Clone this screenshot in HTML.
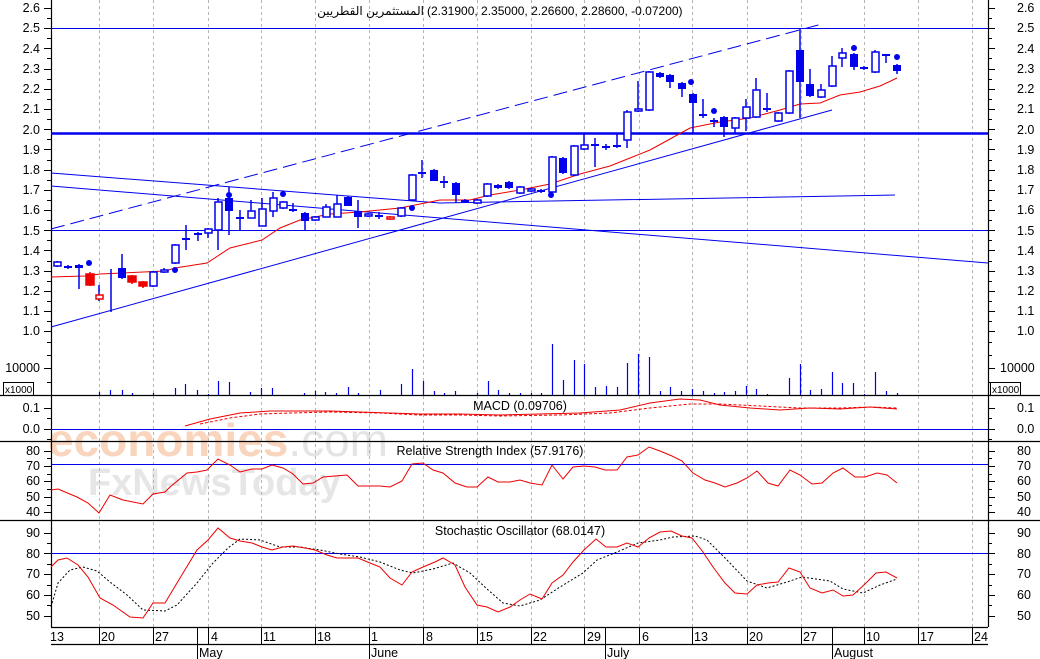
<!DOCTYPE html>
<html><head><meta charset="utf-8"><style>
html,body{margin:0;padding:0;background:#fff;}
svg{display:block;font-family:"Liberation Sans","Noto Sans CJK SC","DejaVu Sans",sans-serif;}
</style></head><body>
<svg width="1040" height="659" viewBox="0 0 1040 659" xmlns="http://www.w3.org/2000/svg">
<rect width="1040" height="659" fill="#fff"/>
<!-- watermark -->
<text x="48" y="456" font-size="46" fill="#f8c8a8" opacity="0.75" font-weight="bold">economies<tspan fill="#dcdcdc" font-weight="normal">.com</tspan></text>
<text x="88" y="495" font-size="38" fill="#e6e6e6" font-weight="bold">FxNewsToday</text>
<!-- grid -->
<g stroke="#b5b5b5" stroke-dasharray="3,3" stroke-width="1">
<path d="M99.5 0V627M153.5 0V627M208.5 0V627M261.5 0V627M315.5 0V627M369.5 0V627M423.5 0V627M477.5 0V627M531.5 0V627M584.5 0V627M639.5 0V627M692.5 0V627M747.5 0V627M801.5 0V627M864.5 0V627M918.5 0V627M972.5 0V627"/>
</g>
<!-- panel separators -->
<g stroke="#000" stroke-width="1.2">
<path d="M0 395.5H1040M0 441.5H1040M0 520.5H1040M51 627.5H988M51 644.5H988"/>
<path d="M51.5 0V627M988.5 0V627"/>
</g>
<!-- date ticks -->
<g stroke="#000"><path d="M99.5 627V644M153.5 627V644M208.5 627V644M261.5 627V644M315.5 627V644M369.5 627V644M423.5 627V644M477.5 627V644M531.5 627V644M584.5 627V644M639.5 627V644M692.5 627V644M747.5 627V644M801.5 627V644M864.5 627V644M918.5 627V644M972.5 627V644M197.5 627V659M369.5 644V659M605.5 627V659M832.5 627V659"/></g>
<g font-size="12.5" fill="#000">
<text x="50" y="641">13</text><text x="101" y="641">20</text><text x="155" y="641">27</text><text x="211" y="641">4</text><text x="263" y="641">11</text><text x="317" y="641">18</text><text x="371" y="641">1</text><text x="426" y="641">8</text><text x="479" y="641">15</text><text x="533" y="641">22</text><text x="587" y="641">29</text><text x="642" y="641">6</text><text x="694" y="641">13</text><text x="749" y="641">20</text><text x="803" y="641">27</text><text x="866" y="641">10</text><text x="920" y="641">17</text><text x="974" y="641">24</text>
<text x="199" y="657">May</text><text x="371" y="657">June</text><text x="607" y="657">July</text><text x="834" y="657">August</text>
</g>
<!-- axis labels -->
<g font-size="12.5" fill="#000" text-anchor="end">
<text x="40" y="12">2.6</text><text x="40" y="32">2.5</text><text x="40" y="53">2.4</text><text x="40" y="73">2.3</text><text x="40" y="93">2.2</text><text x="40" y="113">2.1</text><text x="40" y="134">2.0</text><text x="40" y="154">1.9</text><text x="40" y="174">1.8</text><text x="40" y="194">1.7</text><text x="40" y="214">1.6</text><text x="40" y="235">1.5</text><text x="40" y="255">1.4</text><text x="40" y="275">1.3</text><text x="40" y="295">1.2</text><text x="40" y="315">1.1</text><text x="40" y="335">1.0</text>
<text x="40" y="372">10000</text>
<text x="40" y="412">0.1</text><text x="40" y="433">0.0</text>
<text x="40" y="455">80</text><text x="40" y="470">70</text><text x="40" y="485">60</text><text x="40" y="501">50</text><text x="40" y="516">40</text>
<text x="40" y="537">90</text><text x="40" y="558">80</text><text x="40" y="578">70</text><text x="40" y="599">60</text><text x="40" y="620">50</text>
</g>
<g font-size="12.5" fill="#000" text-anchor="start">
<text x="1017" y="12">2.6</text><text x="1017" y="32">2.5</text><text x="1017" y="53">2.4</text><text x="1017" y="73">2.3</text><text x="1017" y="93">2.2</text><text x="1017" y="113">2.1</text><text x="1017" y="134">2.0</text><text x="1017" y="154">1.9</text><text x="1017" y="174">1.8</text><text x="1017" y="194">1.7</text><text x="1017" y="214">1.6</text><text x="1017" y="235">1.5</text><text x="1017" y="255">1.4</text><text x="1017" y="275">1.3</text><text x="1017" y="295">1.2</text><text x="1017" y="315">1.1</text><text x="1017" y="335">1.0</text>
<text x="1000" y="372">10000</text>
<text x="1017" y="412">0.1</text><text x="1017" y="433">0.0</text>
<text x="1017" y="455">80</text><text x="1017" y="470">70</text><text x="1017" y="485">60</text><text x="1017" y="501">50</text><text x="1017" y="516">40</text>
<text x="1017" y="537">90</text><text x="1017" y="558">80</text><text x="1017" y="578">70</text><text x="1017" y="599">60</text><text x="1017" y="620">50</text>
</g>
<g stroke="#000" fill="none"><rect x="3.5" y="382.5" width="30" height="13"/><rect x="990.5" y="382.5" width="30" height="13"/></g>
<text x="5" y="393" font-size="10">x1000</text><text x="992" y="393" font-size="10">x1000</text>
<!-- axis ticks -->
<g stroke="#000">
<path d="M44 8.5H51M44 28.5H51M44 48.5H51M44 69.5H51M44 89.5H51M44 109.5H51M44 129.5H51M44 149.5H51M44 170.5H51M44 190.5H51M44 210.5H51M44 230.5H51M44 250.5H51M44 271.5H51M44 291.5H51M44 311.5H51M44 331.5H51M44 368.5H51M44 408.5H51M44 429.5H51M44 451.5H51M44 466.5H51M44 481.5H51M44 497.5H51M44 512.5H51M44 533.5H51M44 553.5H51M44 574.5H51M44 595.5H51M44 616.5H51"/>
<path d="M47 18.5H51M47 38.5H51M47 58.5H51M47 79.5H51M47 99.5H51M47 119.5H51M47 139.5H51M47 160.5H51M47 180.5H51M47 200.5H51M47 220.5H51M47 240.5H51M47 261.5H51M47 281.5H51M47 301.5H51M47 321.5H51M47 342.5H51M47 355.5H51M47 382.5H51M47 418.5H51M47 439.5H51M47 458.5H51M47 474.5H51M47 489.5H51M47 505.5H51M47 543.5H51M47 564.5H51M47 585.5H51M47 605.5H51"/>
<path d="M988 8.5H995M988 28.5H995M988 48.5H995M988 69.5H995M988 89.5H995M988 109.5H995M988 129.5H995M988 149.5H995M988 170.5H995M988 190.5H995M988 210.5H995M988 230.5H995M988 250.5H995M988 271.5H995M988 291.5H995M988 311.5H995M988 331.5H995M988 368.5H995M988 408.5H995M988 429.5H995M988 451.5H995M988 466.5H995M988 481.5H995M988 497.5H995M988 512.5H995M988 533.5H995M988 553.5H995M988 574.5H995M988 595.5H995M988 616.5H995"/>
<path d="M988 18.5H992M988 38.5H992M988 58.5H992M988 79.5H992M988 99.5H992M988 119.5H992M988 139.5H992M988 160.5H992M988 180.5H992M988 200.5H992M988 220.5H992M988 240.5H992M988 261.5H992M988 281.5H992M988 301.5H992M988 321.5H992M988 342.5H992M988 355.5H992M988 382.5H992M988 418.5H992M988 439.5H992M988 458.5H992M988 474.5H992M988 489.5H992M988 505.5H992M988 543.5H992M988 564.5H992M988 585.5H992M988 605.5H992"/>
</g>
<!-- title -->
<text x="424" y="15" font-size="12" text-anchor="end" fill="#000">المستثمرين القطريين</text>
<text x="427" y="15" font-size="12" text-anchor="start" fill="#000">(2.31900, 2.35000, 2.26600, 2.28600, -0.07200)</text>
<!-- horizontal & trend lines -->
<g stroke="#0000ee" fill="none" stroke-width="1">
<path d="M51 28.5H988M51 230.5H988"/>
<path d="M51 133.5H988" stroke-width="2.5"/>
<path d="M51 327L832 110"/>
<path d="M51 229L822 24" stroke-dasharray="14,6"/>
<path d="M51 173L400 200L440 203L895 195"/>
<path d="M51 186L988 263"/>
</g>
<!-- MA -->
<polyline fill="none" stroke="#ee0000" stroke-width="1" points="51,277 85,276 100,274 165,271 175,268 207,263 230,248 262,240 280,228 300,220 330,214 360,212 400,208 440,200 470,200 490,195 520,190 550,184 580,174 610,166 630,158 650,150 670,139 690,128 720,122 750,118 780,110 800,104 820,103 840,95 860,92 880,86 897,78"/>
<!-- candles -->
<g stroke="#0000ee" stroke-width="1.5" fill="#fff">
<path d="M57 261V267M68 265V269M79 264V289M99 285V301M111 269V312M122 254V279M153 271V287M164 268V273M175 244V264M186 225V250M198 232V241M208 228V238M218 198V250M229 187V235M240 210V230M251 200V218M262 198V226M273 192V217M283 201V209M293 203V212M305 212V230M315 216V221M326 204V217M337 195V217M348 196V206M358 200V228M368 213V217M379 212V219M401 207V217M412 174V201M422 160V178M434 169V181M444 176V188M456 182V203M465 199V203M477 199V204M487 183V197M498 184V189M509 181V189M520 186V194M531 188V192M541 189V193M552 156V193M563 157V174M574 145V176M584 133V150M595 138V167M606 144V150M617 134V148M627 110V148M638 81V112M649 71V111M660 72V78M670 74V88M682 82V97M693 93V133M703 99V118M714 118V127M724 116V137M735 117V133M746 99V131M756 78V118M767 93V112M778 112V122M789 70V114M800 29V118M810 69V97M821 84V98M832 56V87M842 48V67M854 53V70M864 66V70M875 50V73M886 54V63M897 64V74"/>
<rect x="54" y="262" width="7" height="4"/>
<rect x="150" y="272" width="7" height="14"/>
<rect x="161" y="270" width="7" height="2"/>
<rect x="172" y="245" width="7" height="18"/>
<rect x="205" y="229" width="7" height="4"/>
<rect x="215" y="202" width="7" height="28"/>
<rect x="248" y="211" width="7" height="7"/>
<rect x="259" y="209" width="7" height="17"/>
<rect x="270" y="198" width="7" height="13"/>
<rect x="280" y="202" width="7" height="6"/>
<rect x="312" y="217" width="7" height="3"/>
<rect x="323" y="207" width="7" height="10"/>
<rect x="334" y="204" width="7" height="13"/>
<rect x="365" y="214" width="7" height="2"/>
<rect x="398" y="208" width="7" height="8"/>
<rect x="409" y="175" width="7" height="25"/>
<rect x="474" y="200" width="7" height="3"/>
<rect x="484" y="184" width="7" height="12"/>
<rect x="517" y="187" width="7" height="6"/>
<rect x="528" y="189" width="7" height="2"/>
<rect x="549" y="157" width="7" height="35"/>
<rect x="571" y="146" width="7" height="29"/>
<rect x="581" y="145" width="7" height="4"/>
<rect x="624" y="112" width="7" height="28"/>
<rect x="635" y="109" width="7" height="2"/>
<rect x="646" y="72" width="7" height="38"/>
<rect x="732" y="118" width="7" height="10"/>
<rect x="743" y="107" width="7" height="11"/>
<rect x="753" y="90" width="7" height="27"/>
<rect x="775" y="113" width="7" height="8"/>
<rect x="786" y="71" width="7" height="42"/>
<rect x="818" y="90" width="7" height="7"/>
<rect x="829" y="66" width="7" height="20"/>
<rect x="839" y="53" width="7" height="5"/>
<rect x="872" y="52" width="7" height="20"/>
</g>
<g fill="#0000ee">
<rect x="64" y="266" width="8" height="2"/>
<rect x="75" y="265" width="8" height="3"/>
<rect x="118" y="268" width="8" height="10"/>
<rect x="182" y="238" width="8" height="2"/>
<rect x="194" y="233" width="8" height="2"/>
<rect x="225" y="198" width="8" height="13"/>
<rect x="236" y="217" width="8" height="2"/>
<rect x="289" y="209" width="8" height="2"/>
<rect x="301" y="213" width="8" height="8"/>
<rect x="344" y="197" width="8" height="9"/>
<rect x="354" y="211" width="8" height="6"/>
<rect x="375" y="215" width="8" height="2"/>
<rect x="418" y="172" width="8" height="2"/>
<rect x="430" y="170" width="8" height="11"/>
<rect x="440" y="181" width="8" height="2"/>
<rect x="452" y="183" width="8" height="12"/>
<rect x="461" y="200" width="8" height="2"/>
<rect x="494" y="185" width="8" height="3"/>
<rect x="505" y="182" width="8" height="6"/>
<rect x="537" y="190" width="8" height="2"/>
<rect x="559" y="158" width="8" height="15"/>
<rect x="591" y="144" width="8" height="2"/>
<rect x="602" y="146" width="8" height="2"/>
<rect x="613" y="145" width="8" height="2"/>
<rect x="656" y="73" width="8" height="4"/>
<rect x="666" y="75" width="8" height="7"/>
<rect x="678" y="83" width="8" height="6"/>
<rect x="689" y="94" width="8" height="9"/>
<rect x="699" y="114" width="8" height="2"/>
<rect x="710" y="120" width="8" height="2"/>
<rect x="720" y="117" width="8" height="10"/>
<rect x="763" y="108" width="8" height="2"/>
<rect x="796" y="50" width="8" height="32"/>
<rect x="806" y="84" width="8" height="12"/>
<rect x="850" y="54" width="8" height="13"/>
<rect x="860" y="67" width="8" height="2"/>
<rect x="882" y="54" width="8" height="2"/>
<rect x="893" y="65" width="8" height="6"/>
<circle cx="89" cy="263" r="3"/><circle cx="175" cy="270" r="3"/><circle cx="229" cy="195" r="3"/><circle cx="283" cy="194" r="3"/><circle cx="412" cy="208" r="3"/><circle cx="551" cy="195" r="3"/><circle cx="691" cy="82" r="3"/><circle cx="714" cy="111" r="3"/><circle cx="854" cy="48" r="3"/><circle cx="897" cy="57" r="3"/>
</g>
<g stroke="#ee0000" stroke-width="1.5" fill="#fff">
<path d="M90 272V286M132 275V284M143 281V288M390 216V220"/>
<rect x="86" y="274" width="8" height="11" fill="#ee0000"/>
<rect x="128" y="276" width="8" height="6" fill="#ee0000"/>
<rect x="139" y="282" width="8" height="4" fill="#ee0000"/>
<rect x="96" y="295" width="7" height="4"/>
<rect x="387" y="217" width="7" height="2"/>
</g>
<!-- volume -->
<g stroke="#0000ee" stroke-width="1.2">
<path d="M99.5 395V392M110.5 395V390M122.5 395V390M132.5 395V393M153.5 395V393M175.5 395V388M185.5 395V384M197.5 395V390M208.5 395V394M218.5 395V381M229.5 395V382M250.5 395V392M261.5 395V388M272.5 395V388M304.5 395V393M315.5 395V391M325.5 395V392M336.5 395V393M348.5 395V387M358.5 395V393M380.5 395V390M401.5 395V384M412.5 395V369M423.5 395V381M434.5 395V391M444.5 395V393M455.5 395V391M477.5 395V393M488.5 395V381M498.5 395V390M509.5 395V393M520.5 395V393M531.5 395V393M541.5 395V393M552.5 395V344M563.5 395V380M574.5 395V360M584.5 395V364M595.5 395V387M606.5 395V386M617.5 395V387M627.5 395V363M638.5 395V354M649.5 395V357M660.5 395V391M670.5 395V387M681.5 395V391M692.5 395V389M703.5 395V391M714.5 395V393M724.5 395V392M735.5 395V391M746.5 395V386M756.5 395V389M767.5 395V394M789.5 395V378M800.5 395V364M810.5 395V390M821.5 395V389M832.5 395V372M842.5 395V383M853.5 395V383M864.5 395V394M875.5 395V372M886.5 395V391M897.5 395V393"/>
</g>
<!-- MACD -->
<path d="M51 429.5H988" stroke="#0000ee"/>
<text x="520" y="410" font-size="12.5" text-anchor="middle">MACD (0.09706)</text>
<polyline fill="none" stroke="#ee0000" points="185,426 210,419 240,413 270,411 300,411 330,411 360,412 390,413 420,414 460,414 500,415 540,414 580,413 620,410 650,403 680,399 700,400 720,405 750,408 780,410 810,408 840,409 870,407 897,409"/>
<polyline fill="none" stroke="#ee0000" stroke-dasharray="3,2" points="200,424 230,418 260,414 290,413 330,412 380,413 420,415 460,415 500,416 560,415 610,413 650,408 690,404 720,404 760,406 800,408 840,408 870,407 897,408"/>
<!-- RSI -->
<path d="M51 464.5H988" stroke="#0000ee"/>
<text x="490" y="455" font-size="12.5" text-anchor="middle">Relative Strength Index (57.9176)</text>
<polyline fill="none" stroke="#ee0000" points="51,490 58,489 77,497 88,503 99,513 110,495 123,500 133,502 143,504 153,494 165,492 170,487 187,473 197,472 207,470 218,459 230,465 240,472 252,469 262,469 272,465 283,468 293,474 303,484 313,483 323,477 335,476 347,475 358,486 368,486 380,486 390,487 402,481 412,464 423,463 433,470 443,473 455,483 467,487 477,487 488,477 498,482 510,482 520,480 530,483 542,485 552,465 563,479 573,467 584,466 595,467 605,470 617,470 627,457 638,455 649,447 660,451 672,456 682,461 693,473 705,480 715,483 725,487 737,483 747,478 757,471 768,483 778,486 790,470 800,475 812,484 822,483 833,473 843,468 855,477 865,477 877,473 887,475 897,483"/>
<!-- Stoch -->
<path d="M51 553.5H988" stroke="#0000ee"/>
<text x="520" y="535" font-size="12.5" text-anchor="middle">Stochastic Oscillator (68.0147)</text>
<polyline fill="none" stroke="#000" stroke-dasharray="2,2" points="51,607 58,583 70,570 83,567 97,571 110,582 127,595 143,610 165,611 177,605 197,583 213,563 228,548 240,539 260,540 280,547 300,547 320,550 340,554 360,557 380,562 400,570 413,573 433,569 453,563 470,573 487,589 503,603 520,606 540,600 560,587 583,573 597,560 617,552 638,543 660,540 673,537 695,536 707,540 727,560 747,581 767,588 787,582 802,577 830,581 843,589 863,593 880,585 897,579"/>
<polyline fill="none" stroke="#ee0000" points="51,567 58,560 67,558 78,565 88,577 100,598 113,605 130,617 143,618 153,603 165,603 177,583 197,550 208,540 218,528 230,538 240,541 252,543 262,547 272,550 283,547 293,546 305,548 315,550 327,555 337,558 358,558 370,563 380,567 390,578 402,585 412,572 423,567 435,562 443,558 455,565 465,587 477,605 487,607 498,612 510,607 520,600 530,594 542,599 552,583 563,575 573,562 584,550 596,539 606,547 617,547 627,543 638,547 649,538 660,532 671,531 682,536 692,538 703,552 713,567 725,583 735,593 747,594 757,585 768,583 778,582 789,568 800,572 810,588 822,593 833,590 843,596 853,595 865,584 876,573 886,572 897,578"/>
</svg>
</body></html>
